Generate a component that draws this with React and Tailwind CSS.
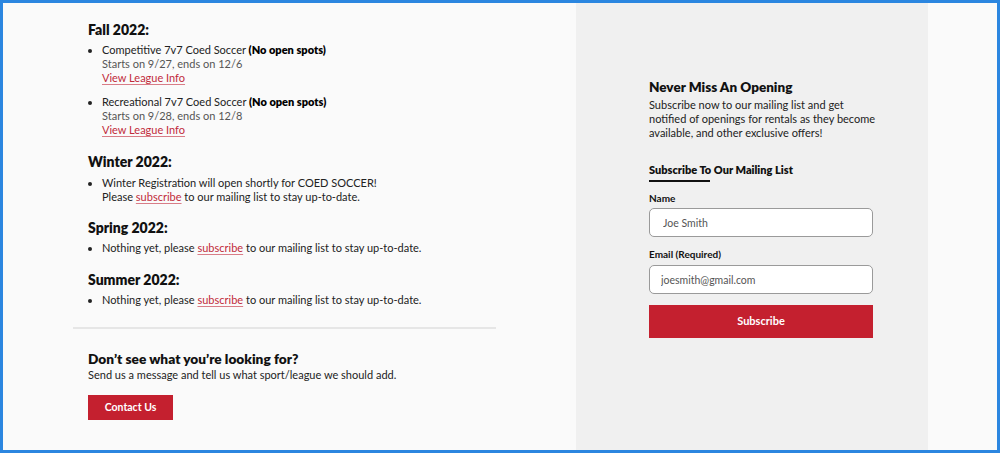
export default function App() {
  const font = { fontFamily: 'Lato, "Open Sans", sans-serif' }
  const Sub = () => <a className="text-[#c12a3b] underline underline-offset-2 decoration-[#c12a3b]/60">subscribe</a>
  return (
    <div style={font} className="w-[1000px] h-[453px] border-[3px] border-[#2b86e0] bg-[#fafafa] flex text-[#222]">
      {/* left column */}
      <div className="w-[573px] pl-[70px] pr-[80px] pt-[17px]">
        <div className="pl-[15px]">
          <h2 className="text-[14px] leading-[20px] font-extrabold text-[#111]">Fall 2022:</h2>
          <ul className="mt-[3px] flex flex-col gap-[10px] text-[11px] leading-[14px] list-disc pl-[14px]">
            <li>
              Competitive 7v7 Coed Soccer <b className="font-extrabold text-black">(No open spots)</b>
              <div className="text-[#555]">Starts on 9/27, ends on 12/6</div>
              <a className="text-[#c12a3b] underline underline-offset-2 decoration-[#c12a3b]/60">View League Info</a>
            </li>
            <li>
              Recreational 7v7 Coed Soccer <b className="font-extrabold text-black">(No open spots)</b>
              <div className="text-[#555]">Starts on 9/28, ends on 12/8</div>
              <a className="text-[#c12a3b] underline underline-offset-2 decoration-[#c12a3b]/60">View League Info</a>
            </li>
          </ul>

          <h2 className="mt-[15px] text-[14px] leading-[20px] font-extrabold text-[#111]">Winter 2022:</h2>
          <ul className="mt-[4px] text-[11px] leading-[14px] list-disc pl-[14px]">
            <li>
              Winter Registration will open shortly for COED SOCCER!
              <div>Please <Sub /> to our mailing list to stay up-to-date.</div>
            </li>
          </ul>

          <h2 className="mt-[14px] text-[14px] leading-[20px] font-extrabold text-[#111]">Spring 2022:</h2>
          <ul className="mt-[3px] text-[11px] leading-[14px] list-disc pl-[14px]">
            <li>Nothing yet, please <Sub /> to our mailing list to stay up-to-date.</li>
          </ul>

          <h2 className="mt-[15px] text-[14px] leading-[20px] font-extrabold text-[#111]">Summer 2022:</h2>
          <ul className="mt-[3px] text-[11px] leading-[14px] list-disc pl-[14px]">
            <li>Nothing yet, please <Sub /> to our mailing list to stay up-to-date.</li>
          </ul>
        </div>

        <div className="mt-[20px] h-[2px] bg-[#e6e6e6]" />

        <div className="pl-[15px] pt-[21px]">
          <h3 className="text-[13.7px] leading-[18px] font-extrabold text-[#111]">Don’t see what you’re looking for?</h3>
          <p className="text-[11px] leading-[14px]">Send us a message and tell us what sport/league we should add.</p>
          <button className="mt-[13px] w-[85px] h-[25px] bg-[#c4202f] text-white text-[10.5px] font-bold">Contact Us</button>
        </div>
      </div>

      {/* subscribe panel */}
      <div className="w-[352px] bg-[#f0f0f0] pl-[73px] pr-[55px] pt-[75px]">
        <h2 className="text-[13.5px] leading-[18px] font-extrabold text-[#111]">Never Miss An Opening</h2>
        <p className="mt-[2px] w-[232px] text-[11px] leading-[14px]">
          Subscribe now to our mailing list and get notified of openings for rentals as they become available, and other exclusive offers!
        </p>
        <div className="mt-[23px] text-[11px] leading-[14px] font-extrabold text-[#111]">Subscribe To Our Mailing List</div>
        <div className="mt-[3px] w-[61px] h-[2px] bg-[#111]" />
        <label className="block mt-[9px] text-[10px] leading-[14px] font-bold text-[#111]">Name</label>
        <input
          defaultValue="Joe Smith"
          className="mt-[3px] w-full h-[29px] rounded-[5px] border border-[#9a9a9a] bg-white px-[13px] text-[10.5px] text-[#555]"
          style={font}
        />
        <label className="block mt-[10px] text-[10px] leading-[14px] font-bold text-[#111]">Email (Required)</label>
        <input
          defaultValue="joesmith@gmail.com"
          className="mt-[4px] w-full h-[29px] rounded-[5px] border border-[#9a9a9a] bg-white px-[11px] text-[10.5px] text-[#555]"
          style={font}
        />
        <button className="mt-[11px] w-full h-[33px] bg-[#c4202f] text-white text-[11px] font-bold">Subscribe</button>
      </div>

      <div className="flex-1" />
    </div>
  )
}
